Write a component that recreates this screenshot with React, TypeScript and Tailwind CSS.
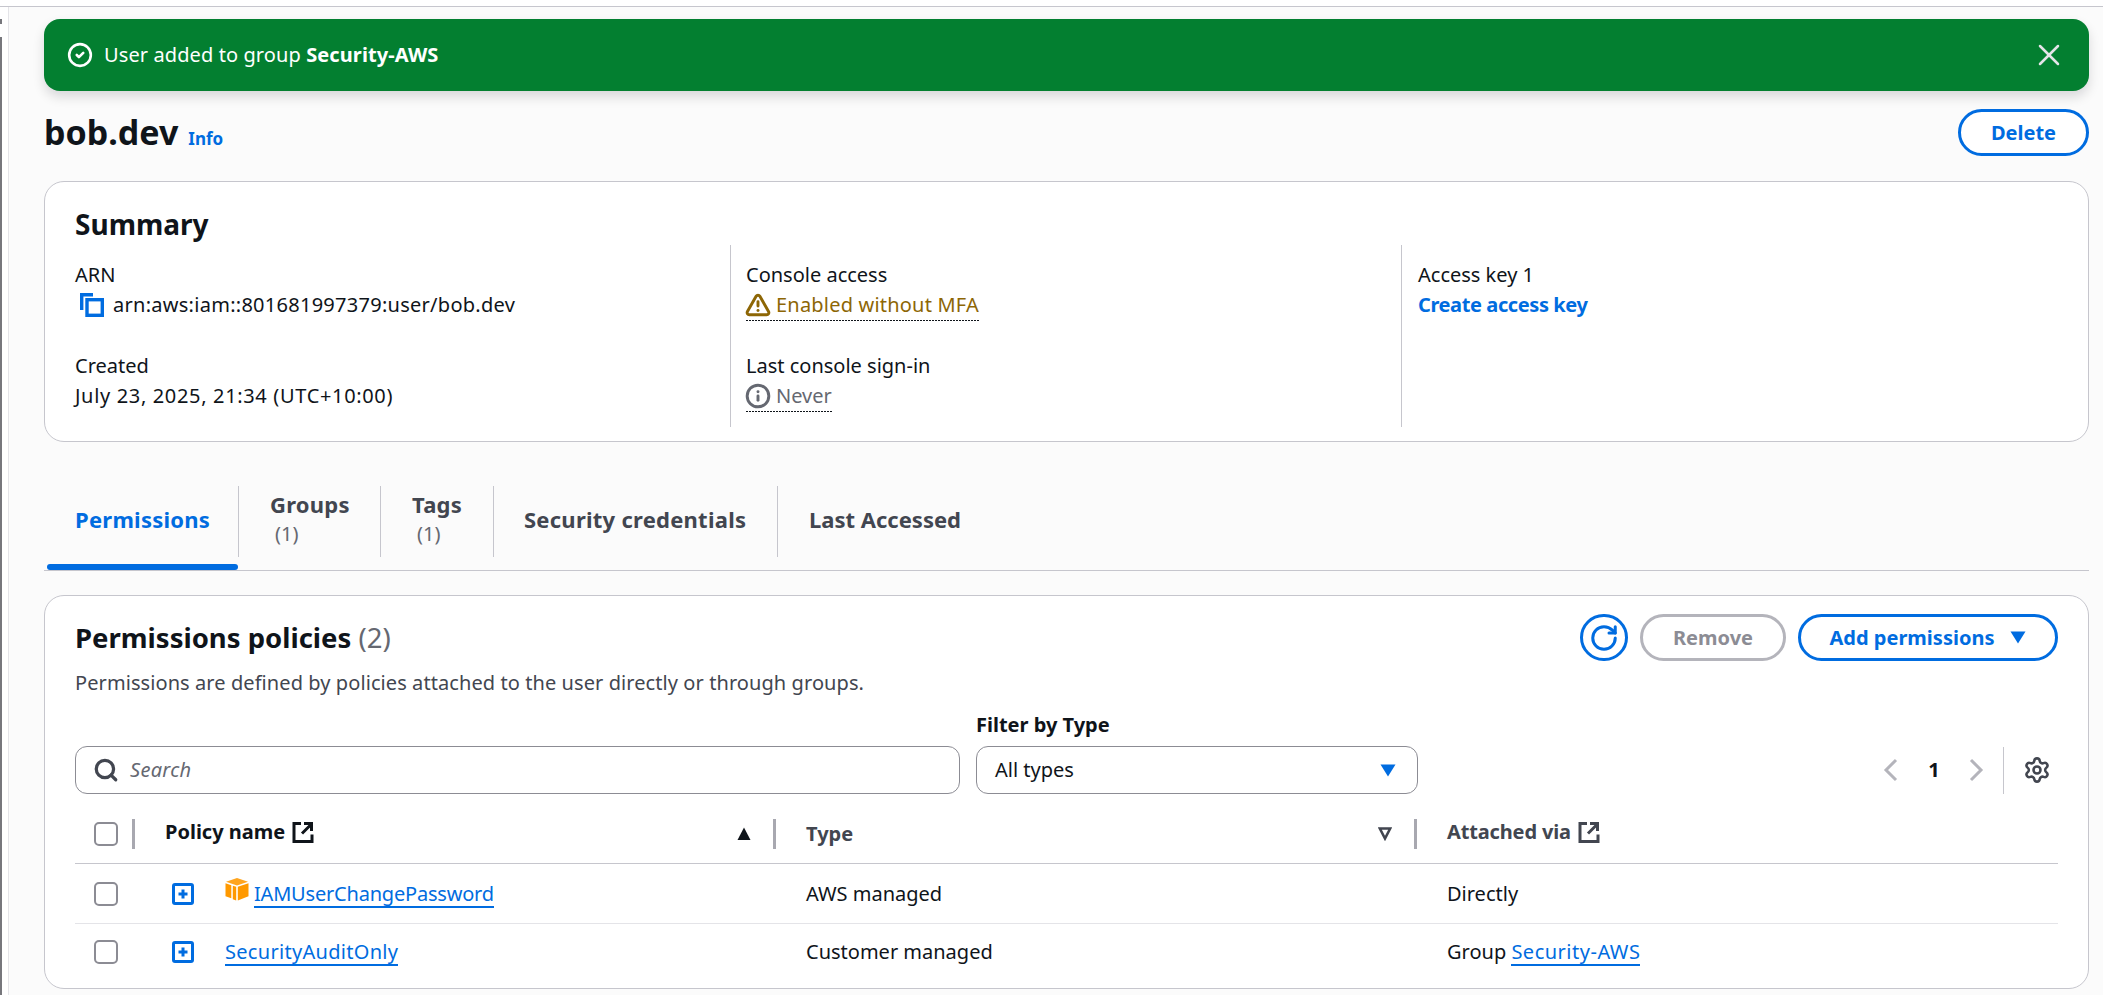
import React from "react";
import { CircleCheck, Info, RotateCw, Search, Settings, TriangleAlert, X } from "lucide-react";

const BLUE = "text-[#006ce0]";

function ExternalIcon({ className }: { className: string }) {
  return (
    <svg viewBox="0 0 22 22" className={className} fill="none" stroke="currentColor" strokeWidth="3">
      <path d="M9 2.5H2v18h18v-7" />
      <path d="M10 12.5 18.5 4M12 2.5h7.5V10" />
    </svg>
  );
}

function ExpandIcon() {
  return (
    <svg viewBox="0 0 22 22" className="w-[22px] h-[22px] shrink-0" fill="none" stroke="#006ce0">
      <rect x="1.5" y="1.5" width="19" height="19" rx="1.5" strokeWidth="3" />
      <path d="M11 6.5v9M6.5 11h9" strokeWidth="3" />
    </svg>
  );
}

function CubeIcon() {
  return (
    <svg viewBox="0 0 24 23" className="w-6 h-[23px] shrink-0 -mt-[8px]">
      <path d="M12 0 23 3.8 12 7.4 1 3.8Z" fill="#ffa51f" />
      <path d="M0.5 5.3 6.3 7.2V20.2L0.5 18.2Z" fill="#ff9900" />
      <path d="M7.8 7.7 11.2 8.8V22.4L7.8 21.2Z" fill="#ff9900" />
      <path d="M12.8 8.8 23.5 5.3V18.2L12.8 22.4Z" fill="#ff9900" />
    </svg>
  );
}

function Checkbox() {
  return <div className="w-6 h-6 shrink-0 ml-[19px] rounded-[5px] border-2 border-[#8c8c94] bg-white" />;
}

function Sep() {
  return <div className="w-[3px] h-[30px] bg-[#a8a8b0] shrink-0" />;
}

function Link({ children, track }: { children: React.ReactNode; track: string }) {
  return <span className={`${BLUE} ${track} border-b-2 border-[#006ce0] leading-[25px] inline-block`}>{children}</span>;
}

function Label({ children }: { children: React.ReactNode }) {
  return <div className="h-[30px] leading-[30px] text-[#0f141a]">{children}</div>;
}

function Dotted() {
  return <div className="h-px bg-[repeating-linear-gradient(90deg,#0f141a_0_2px,transparent_2px_3px)]" />;
}

function Tab({ w, pl, label, count, active, track = "tracking-[0.25px]" }: { w: string; pl: string; label: string; count?: boolean; active?: boolean; track?: string }) {
  return (
    <div className={`${w} ${pl} h-[71px] flex flex-col justify-center pb-[5px] border-r border-[#c6c6cd] last:border-r-0 shrink-0`}>
      <div className={`text-[22px] font-bold leading-[28px] ${track} ${active ? BLUE : "text-[#424650]"}`}>{label}</div>
      {count && <div className="text-[20px] leading-[28px] text-[#656871] mt-[2px] pl-[5px]">(1)</div>}
    </div>
  );
}

export default function App() {
  return (
    <div className="w-full h-[995px] overflow-hidden bg-white text-[20px] text-[#0f141a] font-['Noto_Sans',sans-serif]">
      <div className="h-[7px] border-b border-[#c6c6cd]" />
      <div className="flex h-[988px] bg-[#fbfbfb]">
        <div className="w-[9px] shrink-0 border-r border-[#e4e4e8] bg-white pt-[12px]">
          <div className="w-[2px] h-[5px] bg-[#77777c]" />
          <div className="w-[2px] h-full mt-[13px] bg-[#77777c]" />
        </div>
        <main className="flex-1 min-w-0 pl-[35px] pr-[14px] pt-[12px]">
          <div className="h-[72px] rounded-[16px] bg-[#037f30] text-white shadow-[0_6px_12px_rgba(0,7,22,0.14)] flex items-center pl-[23px] pr-[22px]">
            <CircleCheck className="w-[26px] h-[26px] shrink-0" strokeWidth={2.4} />
            <div className="ml-[11px] flex-1 tracking-[0.1px]">
              User added to group <span className="font-bold">Security-AWS</span>
            </div>
            <X className="w-[36px] h-[36px] text-[#e4e4e8] shrink-0" strokeWidth={1.7} />
          </div>

          <div className="mt-[18px] flex items-center justify-between h-[47px]">
            <div className="flex items-baseline">
              <h1 className="text-[34px] font-bold leading-[47px] text-[#0f141a]">bob.dev</h1>
              <span className={`ml-[10px] text-[17px] font-bold ${BLUE}`}>Info</span>
            </div>
            <button className={`w-[131px] h-[47px] rounded-full border-[3px] border-[#006ce0] bg-white font-bold ${BLUE}`}>Delete</button>
          </div>

          <section className="mt-[25px] h-[261px] rounded-[20px] border border-[#c6c6cd] bg-white pl-[30px] pt-[25px]">
            <h2 className="text-[28px] font-bold leading-[34px]">Summary</h2>
            <div className="mt-[4px] h-[182px] grid grid-cols-[655px_671px_1fr]">
              <div className="pt-[15px]">
                <Label>ARN</Label>
                <div className="h-[30px] flex items-center">
                  <svg viewBox="0 0 24 24" className="w-6 h-6 ml-[5px] shrink-0" fill="none" stroke="#006ce0" strokeWidth="3.4">
                    <path d="M13 1.7H1.7V17" />
                    <rect x="7" y="6.7" width="15.3" height="15.6" />
                  </svg>
                  <span className="ml-[9px] tracking-[0.27px]">arn:aws:iam::801681997379:user/bob.dev</span>
                </div>
                <div className="mt-[31px]">
                  <Label>Created</Label>
                  <Label><span className="tracking-[0.66px]">July 23, 2025, 21:34 (UTC+10:00)</span></Label>
                </div>
              </div>
              <div className="border-l border-[#c6c6cd] pl-[15px] pt-[15px]">
                <Label>Console access</Label>
                <div className="w-fit">
                  <div className="h-[30px] flex items-center text-[#8d6605]">
                    <TriangleAlert className="w-[26px] h-[26px] -ml-[1px] shrink-0" strokeWidth={2.7} />
                    <span className="ml-[5px] tracking-[0.2px]">Enabled without MFA</span>
                  </div>
                  <Dotted />
                </div>
                <div className="mt-[30px]">
                  <Label>Last console sign-in</Label>
                  <div className="w-fit">
                    <div className="h-[30px] flex items-center text-[#656871]">
                      <Info className="w-[26px] h-[26px] -ml-[1px] shrink-0" strokeWidth={2.7} />
                      <span className="ml-[5px]">Never</span>
                    </div>
                    <Dotted />
                  </div>
                </div>
              </div>
              <div className="border-l border-[#c6c6cd] pl-[16px] pt-[15px]">
                <Label>Access key 1</Label>
                <div className={`h-[30px] leading-[30px] font-bold tracking-[-0.4px] ${BLUE}`}>Create access key</div>
              </div>
            </div>
          </section>

          <nav className="mt-[44px]">
            <div className="flex">
              <Tab w="w-[195px]" pl="pl-[31px]" label="Permissions" active />
              <Tab w="w-[142px]" pl="pl-[31px]" label="Groups" count />
              <Tab w="w-[113px]" pl="pl-[31px]" label="Tags" count />
              <Tab w="w-[284px]" pl="pl-[30px]" label="Security credentials" />
              <Tab w="w-[300px]" pl="pl-[31px]" label="Last Accessed" track="tracking-[0px]" />
            </div>
            <div className="h-[14px] border-b border-[#c6c6cd] pt-[7px] pl-[3px]">
              <div className="w-[191px] h-[6px] rounded-full bg-[#006ce0]" />
            </div>
          </nav>

          <section className="mt-[24px] h-[394px] rounded-[20px] border border-[#c6c6cd] bg-white pl-[30px] pr-[30px] pt-[18px]">
            <div className="flex items-center justify-between h-[47px]">
              <h2 className="text-[27.5px] font-bold">
                Permissions policies <span className="font-normal text-[#656871]">(2)</span>
              </h2>
              <div className="flex gap-[12px]">
                <button className={`w-[48px] h-[47px] rounded-full border-[3px] border-[#006ce0] flex items-center justify-center bg-white ${BLUE}`}>
                  <RotateCw className="w-[30px] h-[30px]" strokeWidth={2.4} />
                </button>
                <button className="w-[146px] h-[47px] rounded-full border-[3px] border-[#b4b4bb] bg-white font-bold text-[#8c8c94]">Remove</button>
                <button className={`w-[260px] h-[47px] rounded-full border-[3px] border-[#006ce0] bg-white font-bold flex items-center justify-center gap-[16px] ${BLUE}`}>
                  Add permissions
                  <svg viewBox="0 0 16 13" className="w-4 h-[13px]"><path d="M0.5 0.5h15L8 12.5Z" fill="currentColor" /></svg>
                </button>
              </div>
            </div>
            <p className="mt-[7px] h-[30px] leading-[30px] tracking-[0.08px] text-[#424650]">Permissions are defined by policies attached to the user directly or through groups.</p>

            <div className="mt-[12px] flex items-end">
              <div className="w-[885px] h-[48px] rounded-[12px] border border-[#8c8c94] bg-white flex items-center pl-[17px] text-[#656871]">
                <Search className="w-[26px] h-[26px] text-[#424650] shrink-0" strokeWidth={3} />
                <span className="ml-[11px] italic tracking-[0.3px]">Search</span>
              </div>
              <div className="ml-[16px] w-[442px]">
                <div className="h-[30px] leading-[30px] font-bold mb-[6px]">Filter by Type</div>
                <div className="h-[48px] rounded-[12px] border border-[#8c8c94] bg-white flex items-center justify-between pl-[18px] pr-[21px]">
                  <span>All types</span>
                  <svg viewBox="0 0 16 13" className="w-4 h-[13px]"><path d="M0.5 0.5h15L8 12.5Z" fill="#006ce0" /></svg>
                </div>
              </div>
              <div className="flex-1 h-[48px] flex items-center justify-end pr-[7px]">
                <svg viewBox="0 0 24 24" className="w-6 h-6 text-[#b4b4bb]" fill="none" stroke="currentColor" strokeWidth="3"><path d="M17 2 7 12l10 10" /></svg>
                <span className="w-6 ml-[19px] text-center font-bold">1</span>
                <svg viewBox="0 0 24 24" className="w-6 h-6 ml-[18px] text-[#b4b4bb]" fill="none" stroke="currentColor" strokeWidth="3"><path d="m7 2 10 10L7 22" /></svg>
                <div className="w-px h-[47px] bg-[#c6c6cd] ml-[15px]" />
                <Settings className="w-7 h-7 ml-[19px] text-[#424650]" strokeWidth={2.2} />
              </div>
            </div>

            <div className="h-[70px] pt-[10px] border-b border-[#c6c6cd] grid grid-cols-[90px_641px_641px_1fr] items-center">
              <div className="flex items-center">
                <Checkbox />
                <div className="ml-[14px]"><Sep /></div>
              </div>
              <div className="flex items-center pr-[30px]">
                <span className="flex items-center font-bold -mt-[4px]">
                  Policy name
                  <ExternalIcon className="w-[22px] h-[22px] ml-[7px]" />
                </span>
                <svg viewBox="0 0 14 14" className="w-[14px] h-[14px] ml-auto mr-[22px]"><path d="M7 0.5 13.5 13H0.5Z" fill="#0f141a" /></svg>
                <Sep />
              </div>
              <div className="flex items-center pr-[30px] text-[#424650]">
                <span className="font-bold">Type</span>
                <svg viewBox="0 0 14 14" className="w-[14px] h-[14px] ml-auto mr-[22px]" fill="none" stroke="#424650" strokeWidth="2.6"><path d="M1.8 1.5h10.4L7 11.5Z" /></svg>
                <Sep />
              </div>
              <span className="flex items-center font-bold text-[#424650] -mt-[4px] tracking-[-0.15px]">
                Attached via
                <ExternalIcon className="w-[22px] h-[22px] ml-[7px]" />
              </span>
            </div>

            <div className="h-[60px] border-b border-[#e4e4e8] grid grid-cols-[90px_641px_641px_1fr] items-center">
              <Checkbox />
              <div className="flex items-center pl-[7px]">
                <ExpandIcon />
                <span className="w-[31px]" />
                <CubeIcon />
                <span className="ml-[5px]"><Link track="tracking-[-0.2px]">IAMUserChangePassword</Link></span>
              </div>
              <span>AWS managed</span>
              <span>Directly</span>
            </div>
            <div className="h-[56px] grid grid-cols-[90px_641px_641px_1fr] items-center">
              <Checkbox />
              <div className="flex items-center pl-[7px]">
                <ExpandIcon />
                <span className="w-[31px]" />
                <Link track="tracking-[0.3px]">SecurityAuditOnly</Link>
              </div>
              <span>Customer managed</span>
              <span>Group <Link track="tracking-[0.5px]">Security-AWS</Link></span>
            </div>
          </section>
        </main>
      </div>
    </div>
  );
}
